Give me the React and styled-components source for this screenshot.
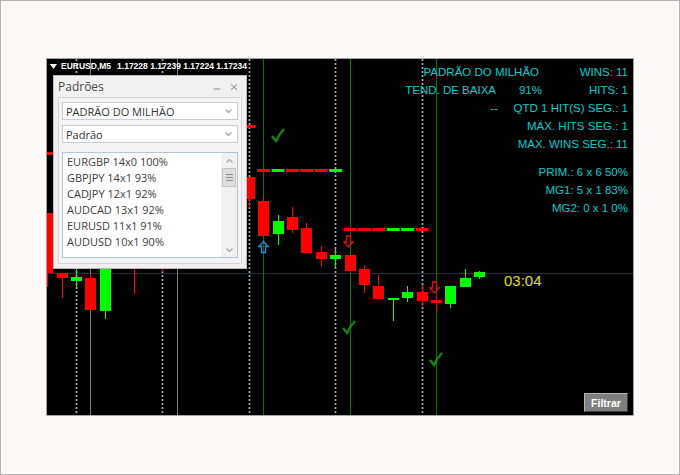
import React from 'react';
import styled, { createGlobalStyle } from 'styled-components';
import { Minus, X } from 'lucide-react';

const GlobalStyle = createGlobalStyle`
  html, body {
    margin: 0;
    padding: 0;
    background: #fdf9f8;
  }
  * {
    box-sizing: border-box;
  }
`;

// candle centres step 14.4px from the left edge of the chart
const cx = (i) => 47.6 + 14.4 * i;

// [index, bodyTop, bodyBottom, wickTop, wickBottom, bullish]
const candles = [
  [0, 213, 273, 213, 287, false],
  [1, 273, 278, 273, 298, false],
  [2, 277, 281, 268, 289, true],
  [3, 278, 310, 274, 310, false],
  [4, 250, 311, 250, 319, true],
  [6, 240, 262, 240, 294, false],
  [8, 230, 250, 230, 272, false],
  [14, 177, 199, 177, 208, false],
  [15, 201, 236, 196, 238, false],
  [16, 221, 234, 215, 245, true],
  [17, 217, 230, 207, 233, false],
  [18, 228, 253, 223, 253, false],
  [19, 252, 259, 246, 267, false],
  [20, 255, 259, 249, 267, true],
  [21, 255, 271, 255, 271, false],
  [22, 269, 285, 265, 293, false],
  [23, 286, 299, 275, 299, false],
  [24, 298, 300, 298, 321, true],
  [25, 292, 298, 286, 302, true],
  [26, 292, 301, 285, 306, false],
  [27, 300, 303, 295, 312, false],
  [28, 286, 304, 286, 308, true],
  [29, 278, 287, 269, 287, true],
  [30, 272, 277, 271, 279, true],
];

// segmented level lines: [y, first index, colours]
const levels = [
  [169, 15, 'rgrrrg'],
  [228, 21, 'rrrggr'],
  [125, 14, 'r'],
  [152, 0, 'r'],
];

const patterns = [
  'EURGBP 14x0 100%',
  'GBPJPY 14x1 93%',
  'CADJPY 12x1 92%',
  'AUDCAD 13x1 92%',
  'EURUSD 11x1 91%',
  'AUDUSD 10x1 90%',
];

const Page = styled.div`
  width: 680px;
  height: 475px;
  border: 1px solid #b4b4b4;
  background: #fdf9f8;
  padding: 57px 0 0 45px;
`;

const Chart = styled.div`
  position: relative;
  width: 588px;
  height: 358px;
  border: 1px solid #a4a4a4;
  background: #000;
  overflow: hidden;
`;

const Canvas = styled.svg`
  display: block;
`;

const SymbolLabel = styled.div`
  position: absolute;
  left: 3px;
  top: 2px;
  display: flex;
  align-items: center;
  gap: 4px;
  font-family: "Liberation Sans", Arial, sans-serif;
  font-size: 8.5px;
  font-weight: bold;
  line-height: 10px;
  color: #fff;
  white-space: nowrap;
`;

const Prices = styled.span`
  margin-left: 2px;
`;

const Panel = styled.div`
  position: absolute;
  left: 6px;
  top: 16px;
  width: 194px;
  height: 194px;
  background: #f0f0f0;
  border: 1px solid #b9b9b9;
  padding: 0 4px 4px;
  display: flex;
  flex-direction: column;
  font-family: "Open Sans", "Noto Sans", sans-serif;
`;

const PanelHeader = styled.div`
  height: 21px;
  display: flex;
  align-items: center;
  justify-content: space-between;
  padding-right: 3px;
`;

const PanelTitle = styled.span`
  font-size: 12px;
  color: #4a4a4a;
`;

const HeaderButtons = styled.div`
  display: flex;
  align-items: center;
  gap: 7px;
  color: #8e8e8e;
`;

const PanelBody = styled.div`
  flex: 1;
  border: 1px solid #d6d6d6;
  background: #f4f4f4;
  padding: 4px 3px;
  display: flex;
  flex-direction: column;
`;

const Select = styled.div`
  height: 18px;
  flex: none;
  margin-bottom: ${(p) => p.$gap}px;
  background: #fff;
  border: 1px solid #c6ced8;
  display: flex;
  align-items: center;
  justify-content: space-between;
  padding: 0 5px 0 3px;
  font-size: 11px;
  color: #333;
`;

const ListBox = styled.div`
  height: 106px;
  flex: none;
  background: #fff;
  border: 1px solid #b6c6d6;
  display: flex;
`;

const ListItems = styled.div`
  flex: 1;
  padding: 1px 0 0 4px;
`;

const ListItem = styled.div`
  height: 16px;
  line-height: 16px;
  font-size: 11px;
  color: #3c3c3c;
  white-space: nowrap;
`;

const ScrollBar = styled.div`
  width: 16px;
  background: #f0f0f0;
  display: flex;
  flex-direction: column;
  align-items: center;
`;

const ScrollArrow = styled.div`
  height: 15px;
  display: flex;
  align-items: center;
  justify-content: center;
`;

const ScrollTrack = styled.div`
  flex: 1;
`;

const ScrollThumb = styled.div`
  width: 14px;
  height: 19px;
  background: #dedede;
  border: 1px solid #c4c4c4;
  display: flex;
  flex-direction: column;
  align-items: center;
  justify-content: center;
  gap: 2px;
`;

const Grip = styled.div`
  width: 7px;
  height: 1px;
  background: #8c8c8c;
`;

const Stats = styled.div`
  position: absolute;
  right: 5px;
  top: 4px;
  display: grid;
  grid-template-columns: 97px 44px 86px;
  grid-template-rows: repeat(5, 18px) 10px repeat(3, 18px);
  font-family: "Liberation Sans", Arial, sans-serif;
  font-size: 11.5px;
  line-height: 18px;
  color: #00ced1;
  text-align: right;
  white-space: nowrap;
`;

const Stat = styled.div`
  grid-column: ${(p) => p.$col || 'auto'};
  padding-right: ${(p) => p.$pad || 0}px;
`;

const Spacer = styled.div`
  grid-column: 1 / -1;
`;

const Timer = styled.div`
  position: absolute;
  left: 457px;
  top: 213px;
  font-family: "Liberation Sans", Arial, sans-serif;
  font-size: 15px;
  line-height: 18px;
  color: #e2e000;
`;

const FilterButton = styled.button`
  position: absolute;
  left: 537px;
  top: 334px;
  width: 44px;
  height: 19px;
  padding: 0;
  background: #7f7f7f;
  border: 1px solid;
  border-color: #b4b4b4 #3c3c3c #3c3c3c #b4b4b4;
  color: #fff;
  font-family: "Liberation Sans", Arial, sans-serif;
  font-size: 10.5px;
  font-weight: bold;
`;

const Chevron = ({ up }) => (
  <svg width="7" height="4" viewBox="0 0 7 4">
    <polyline
      points={up ? '0.5,3.5 3.5,0.5 6.5,3.5' : '0.5,0.5 3.5,3.5 6.5,0.5'}
      fill="none"
      stroke="#a4a4a4"
      strokeWidth="1.2"
    />
  </svg>
);

const Check = ({ x, y }) => (
  <path
    d={`M${x} ${y + 7} L${x + 4} ${y + 12} Q${x + 7} ${y + 5} ${x + 12} ${y}`}
    fill="none"
    stroke="#178417"
    strokeWidth="2.4"
  />
);

const UpArrow = ({ x, y }) => (
  <polygon
    points={`${x},${y} ${x + 4.5},${y + 5} ${x + 2},${y + 5} ${x + 2},${y + 11} ${x - 2},${y + 11} ${x - 2},${y + 5} ${x - 4.5},${y + 5}`}
    fill="none"
    stroke="#1e8fe0"
    strokeWidth="1.4"
  />
);

const DownArrow = ({ x, y }) => (
  <polygon
    points={`${x - 2},${y} ${x + 2},${y} ${x + 2},${y + 6} ${x + 4.5},${y + 6} ${x},${y + 11} ${x - 4.5},${y + 6} ${x - 2},${y + 6}`}
    fill="none"
    stroke="#e01010"
    strokeWidth="1.4"
  />
);

const ChartDrawing = () => {
  const col = (i) => Math.floor(cx(i));
  return (
    <Canvas width="586" height="356" viewBox="0 0 586 356">
      <g transform="translate(-47,-59)">
        <line x1="47" y1="273.5" x2="633" y2="273.5" stroke="#2c2c3a" strokeWidth="1" />

        {[3, 9].map((i) => (
          <line key={`g${i}`} x1={col(i) + 0.5} y1="59" x2={col(i) + 0.5} y2="415" stroke="#7c7c7c" strokeWidth="1" />
        ))}
        {[2, 8, 14, 20, 26].map((i) => (
          <line key={`d${i}`} x1={col(i) + 0.5} y1="59" x2={col(i) + 0.5} y2="415" stroke="#8fb2c4" strokeWidth="1.7" strokeDasharray="2 2" />
        ))}
        {[15, 21, 27].map((i) => (
          <line key={`v${i}`} x1={col(i) + 0.5} y1="59" x2={col(i) + 0.5} y2="415" stroke="#007800" strokeWidth="1" />
        ))}

        {levels.map(([y, start, cols]) =>
          cols.split('').map((c, k) => (
            <rect
              key={`${y}-${k}`}
              x={cx(start + k) - 6.5}
              y={y}
              width="13"
              height="3"
              fill={c === 'g' ? '#00ff00' : '#ff0000'}
            />
          ))
        )}

        {candles.map(([i, bt, bb, wt, wb, bull]) => {
          const fill = bull ? '#00ff00' : '#ff0000';
          const x = col(i);
          return (
            <g key={i}>
              <rect x={x} y={wt} width="1" height={wb - wt} fill={fill} />
              <rect x={x - 5} y={bt} width="11" height={Math.max(bb - bt, 2)} fill={fill} />
            </g>
          );
        })}

        <UpArrow x={263.5} y={241.5} />
        <DownArrow x={348.5} y={236} />
        <DownArrow x={434.5} y={282} />

        <Check x={272} y={129} />
        <Check x={343} y={321} />
        <Check x={430} y={353} />
      </g>
    </Canvas>
  );
};

const App = () => (
  <>
    <GlobalStyle />
    <Page>
      <Chart>
        <ChartDrawing />

        <SymbolLabel>
          <svg width="7" height="5" viewBox="0 0 7 5">
            <polygon points="0,0 7,0 3.5,5" fill="#fff" />
          </svg>
          <span>EURUSD,M5</span>
          <Prices>1.17228 1.17239 1.17224 1.17234</Prices>
        </SymbolLabel>

        <Panel>
          <PanelHeader>
            <PanelTitle>Padrões</PanelTitle>
            <HeaderButtons>
              <Minus size={10} strokeWidth={2.5} style={{ marginTop: 4 }} />
              <X size={10} strokeWidth={2.5} />
            </HeaderButtons>
          </PanelHeader>
          <PanelBody>
            <Select $gap={5}>
              <span>PADRÃO DO MILHÃO</span>
              <Chevron />
            </Select>
            <Select $gap={9}>
              <span>Padrão</span>
              <Chevron />
            </Select>
            <ListBox>
              <ListItems>
                {patterns.map((p) => (
                  <ListItem key={p}>{p}</ListItem>
                ))}
              </ListItems>
              <ScrollBar>
                <ScrollArrow>
                  <Chevron up />
                </ScrollArrow>
                <ScrollThumb>
                  <Grip />
                  <Grip />
                  <Grip />
                </ScrollThumb>
                <ScrollTrack />
                <ScrollArrow>
                  <Chevron />
                </ScrollArrow>
              </ScrollBar>
            </ListBox>
          </PanelBody>
        </Panel>

        <Stats>
          <Stat $col="1 / 3" $pad={3}>PADRÃO DO MILHÃO</Stat>
          <Stat>WINS: 11</Stat>
          <Stat $pad={2}>TEND. DE BAIXA</Stat>
          <Stat>91%</Stat>
          <Stat>HITS: 1</Stat>
          <Stat>--</Stat>
          <Stat $col="2 / 4">QTD 1 HIT(S) SEG.: 1</Stat>
          <Stat $col="1 / -1">MÁX. HITS SEG.: 1</Stat>
          <Stat $col="1 / -1">MÁX. WINS SEG.: 11</Stat>
          <Spacer />
          <Stat $col="1 / -1">PRIM.: 6 x 6 50%</Stat>
          <Stat $col="1 / -1">MG1: 5 x 1 83%</Stat>
          <Stat $col="1 / -1">MG2: 0 x 1 0%</Stat>
        </Stats>

        <Timer>03:04</Timer>
        <FilterButton>Filtrar</FilterButton>
      </Chart>
    </Page>
  </>
);

export default App;
